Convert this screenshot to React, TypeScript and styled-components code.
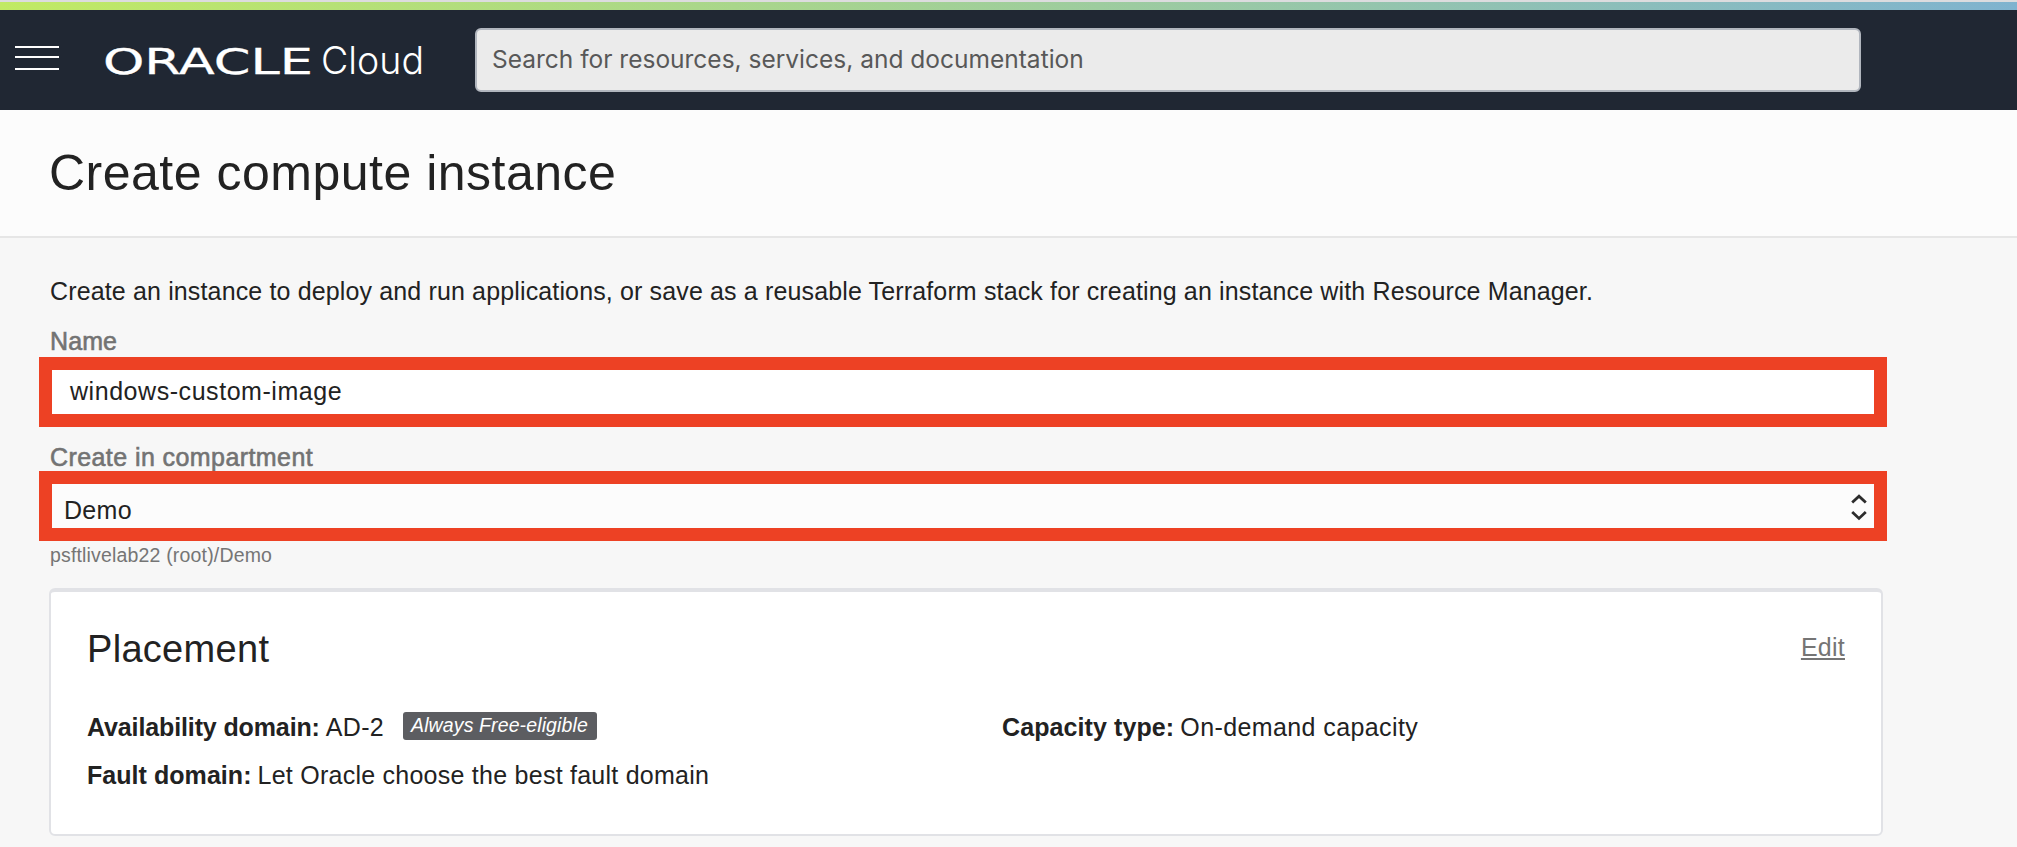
import React from 'react';
import styled, { createGlobalStyle } from 'styled-components';

const GlobalStyle = createGlobalStyle`
  *, *::before, *::after { box-sizing: border-box; }
  body {
    margin: 0;
    background: #f7f7f7;
    color: #222;
    font-family: "Liberation Sans", Arial, sans-serif;
    font-size: 25px;
    line-height: 30px;
    overflow: hidden;
  }
`;

const Page = styled.div`
  height: 847px;
  display: flex;
  flex-direction: column;
`;

const AccentBar = styled.div`
  height: 10px;
  border-top: 2px solid #dcdcde;
  background: linear-gradient(to right, #c1ea64, #7fb3cf);
  background-origin: border-box;
`;

const Header = styled.header`
  height: 100px;
  display: flex;
  align-items: flex-start;
  background: #202733;
`;

const MenuButton = styled.button`
  width: 44px;
  height: 24px;
  margin: 36px 0 0 15px;
  padding: 0;
  border: 0;
  background: none;
`;

const Brand = styled.svg`
  display: block;
  margin: 26px 0 0 43px;
`;

const SearchBox = styled.div`
  width: 1386px;
  height: 64px;
  margin: 18px 0 0 47px;
  padding: 0 15px 3px;
  display: flex;
  align-items: center;
  border: 2px solid #b1b6be;
  border-radius: 6px;
  background: #ebebeb;
  color: #585858;
  font-family: Inter, sans-serif;
  font-size: 24.5px;
`;

const TitleBar = styled.section`
  height: 128px;
  padding-left: 49px;
  display: flex;
  align-items: center;
  border-bottom: 2px solid #e6e6e6;
  background: #fcfcfc;
`;

const Title = styled.h1`
  margin: 0;
  font-size: 50px;
  font-weight: 400;
  line-height: 60px;
  letter-spacing: 0.5px;
`;

const Main = styled.main`
  padding: 38px 0 0 49px;
  display: flex;
  flex-direction: column;
`;

const Intro = styled.p`
  margin: 0 0 20px 1px;
  letter-spacing: 0.14px;
  white-space: nowrap;
`;

const FieldLabel = styled.label<{ $tracking: number }>`
  height: 31px;
  padding-left: 1px;
  color: #737373;
  letter-spacing: ${(p) => p.$tracking}px;
  -webkit-text-stroke: 0.6px #737373;
`;

const Field = styled.div<{ $fill: string; $padding: string; $tracking: number }>`
  width: 1848px;
  height: 70px;
  margin-left: -10px;
  padding: ${(p) => p.$padding};
  display: flex;
  align-items: center;
  justify-content: space-between;
  border: 13px solid #ed4124;
  background: ${(p) => p.$fill};
  letter-spacing: ${(p) => p.$tracking}px;
`;

const NameGroup = styled.div`
  display: flex;
  flex-direction: column;
  margin-bottom: 15px;
`;

const CompartmentGroup = styled.div`
  display: flex;
  flex-direction: column;

  ${FieldLabel} {
    height: 29px;
  }
`;

const Hint = styled.div`
  height: 28px;
  padding-left: 1px;
  color: #757575;
  font-size: 19.5px;
  line-height: 28px;
  letter-spacing: 0.17px;
`;

const Card = styled.section`
  width: 1834px;
  height: 248px;
  margin-top: 19px;
  padding: 0 36px;
  border: 2px solid #e1e2e6;
  border-top-width: 4px;
  border-radius: 6px;
  background: #fff;
`;

const CardHeader = styled.div`
  padding-top: 34px;
  height: 119px;
  display: flex;
  justify-content: space-between;
`;

const CardTitle = styled.h2`
  margin: 0;
  font-size: 38px;
  font-weight: 400;
  line-height: 46px;
  letter-spacing: 0.3px;
`;

const EditLink = styled.a`
  margin-top: 6px;
  color: #757575;
  letter-spacing: 0.25px;
  text-decoration: underline;
  text-decoration-thickness: 2px;
  text-underline-offset: 2px;
`;

const Details = styled.dl`
  margin: 0;
  display: grid;
  grid-template-columns: 915px 1fr;
  row-gap: 16px;
`;

const Detail = styled.div`
  height: 32px;
  display: flex;
  align-items: center;
  white-space: nowrap;
`;

const Term = styled.dt<{ $tracking?: number }>`
  font-weight: 700;
  letter-spacing: ${(p) => p.$tracking ?? 0}px;
`;

const Value = styled.dd<{ $tracking?: number }>`
  margin: 0 0 0 6px;
  letter-spacing: ${(p) => p.$tracking ?? 0}px;
`;

const Badge = styled.span`
  height: 28px;
  margin: 0 0 3px 19px;
  padding: 0 9px 0 8px;
  border-radius: 3px;
  background: #5c5d61;
  color: #fff;
  font-size: 19.5px;
  font-style: italic;
  line-height: 27px;
  letter-spacing: 0.12px;
`;

const Arrows = styled.svg`
  margin-top: -6px;
`;

const MenuIcon = () => (
  <svg width="44" height="24" viewBox="0 0 44 24" fill="#fff">
    <rect width="44" height="2" />
    <rect y="10" width="44" height="2" />
    <rect y="22" width="44" height="2" />
  </svg>
);

const Logo = () => (
  <Brand width="326" height="50" viewBox="0 0 326 50" fill="#fff">
    <text
      x="1"
      y="37.5"
      fontFamily='"DejaVu Sans", sans-serif'
      fontSize="35.5"
      stroke="#fff"
      strokeWidth="0.3"
      textLength="210"
      lengthAdjust="spacingAndGlyphs"
    >
      ORACLE
    </text>
    <text x="219" y="37.5" fontFamily="Inter, sans-serif" fontSize="37.5" fontWeight="300" textLength="103">
      Cloud
    </text>
  </Brand>
);

const SelectArrows = () => (
  <Arrows width="16" height="28" viewBox="0 0 16 28" fill="none" stroke="#2c2c2c" strokeWidth="2.8">
    <path d="M1.2 9.6 8 3.2 14.8 9.6" />
    <path d="M1.2 19 8 25.4 14.8 19" />
  </Arrows>
);

export default function App() {
  return (
    <Page>
      <GlobalStyle />
      <AccentBar />
      <Header>
        <MenuButton aria-label="Menu">
          <MenuIcon />
        </MenuButton>
        <Logo />
        <SearchBox>Search for resources, services, and documentation</SearchBox>
      </Header>
      <TitleBar>
        <Title>Create compute instance</Title>
      </TitleBar>
      <Main>
        <Intro>
          Create an instance to deploy and run applications, or save as a reusable Terraform stack for creating an
          instance with Resource Manager.
        </Intro>
        <NameGroup>
          <FieldLabel $tracking={0.1}>Name</FieldLabel>
          <Field $fill="#fff" $padding="0 7px 2px 18px" $tracking={0.55}>
            windows-custom-image
          </Field>
        </NameGroup>
        <CompartmentGroup>
          <FieldLabel $tracking={0.42}>Create in compartment</FieldLabel>
          <Field $fill="#fcfcfc" $padding="7px 7px 0 12px" $tracking={0.3}>
            Demo
            <SelectArrows />
          </Field>
          <Hint>psftlivelab22 (root)/Demo</Hint>
        </CompartmentGroup>
        <Card>
          <CardHeader>
            <CardTitle>Placement</CardTitle>
            <EditLink>Edit</EditLink>
          </CardHeader>
          <Details>
            <Detail>
              <Term $tracking={-0.12}>Availability domain:</Term>
              <Value $tracking={0.3}>AD-2</Value>
              <Badge>Always Free-eligible</Badge>
            </Detail>
            <Detail>
              <Term $tracking={0.1}>Capacity type:</Term>
              <Value $tracking={0.4}>On-demand capacity</Value>
            </Detail>
            <Detail>
              <Term $tracking={0.05}>Fault domain:</Term>
              <Value $tracking={0.25}>Let Oracle choose the best fault domain</Value>
            </Detail>
          </Details>
        </Card>
      </Main>
    </Page>
  );
}
